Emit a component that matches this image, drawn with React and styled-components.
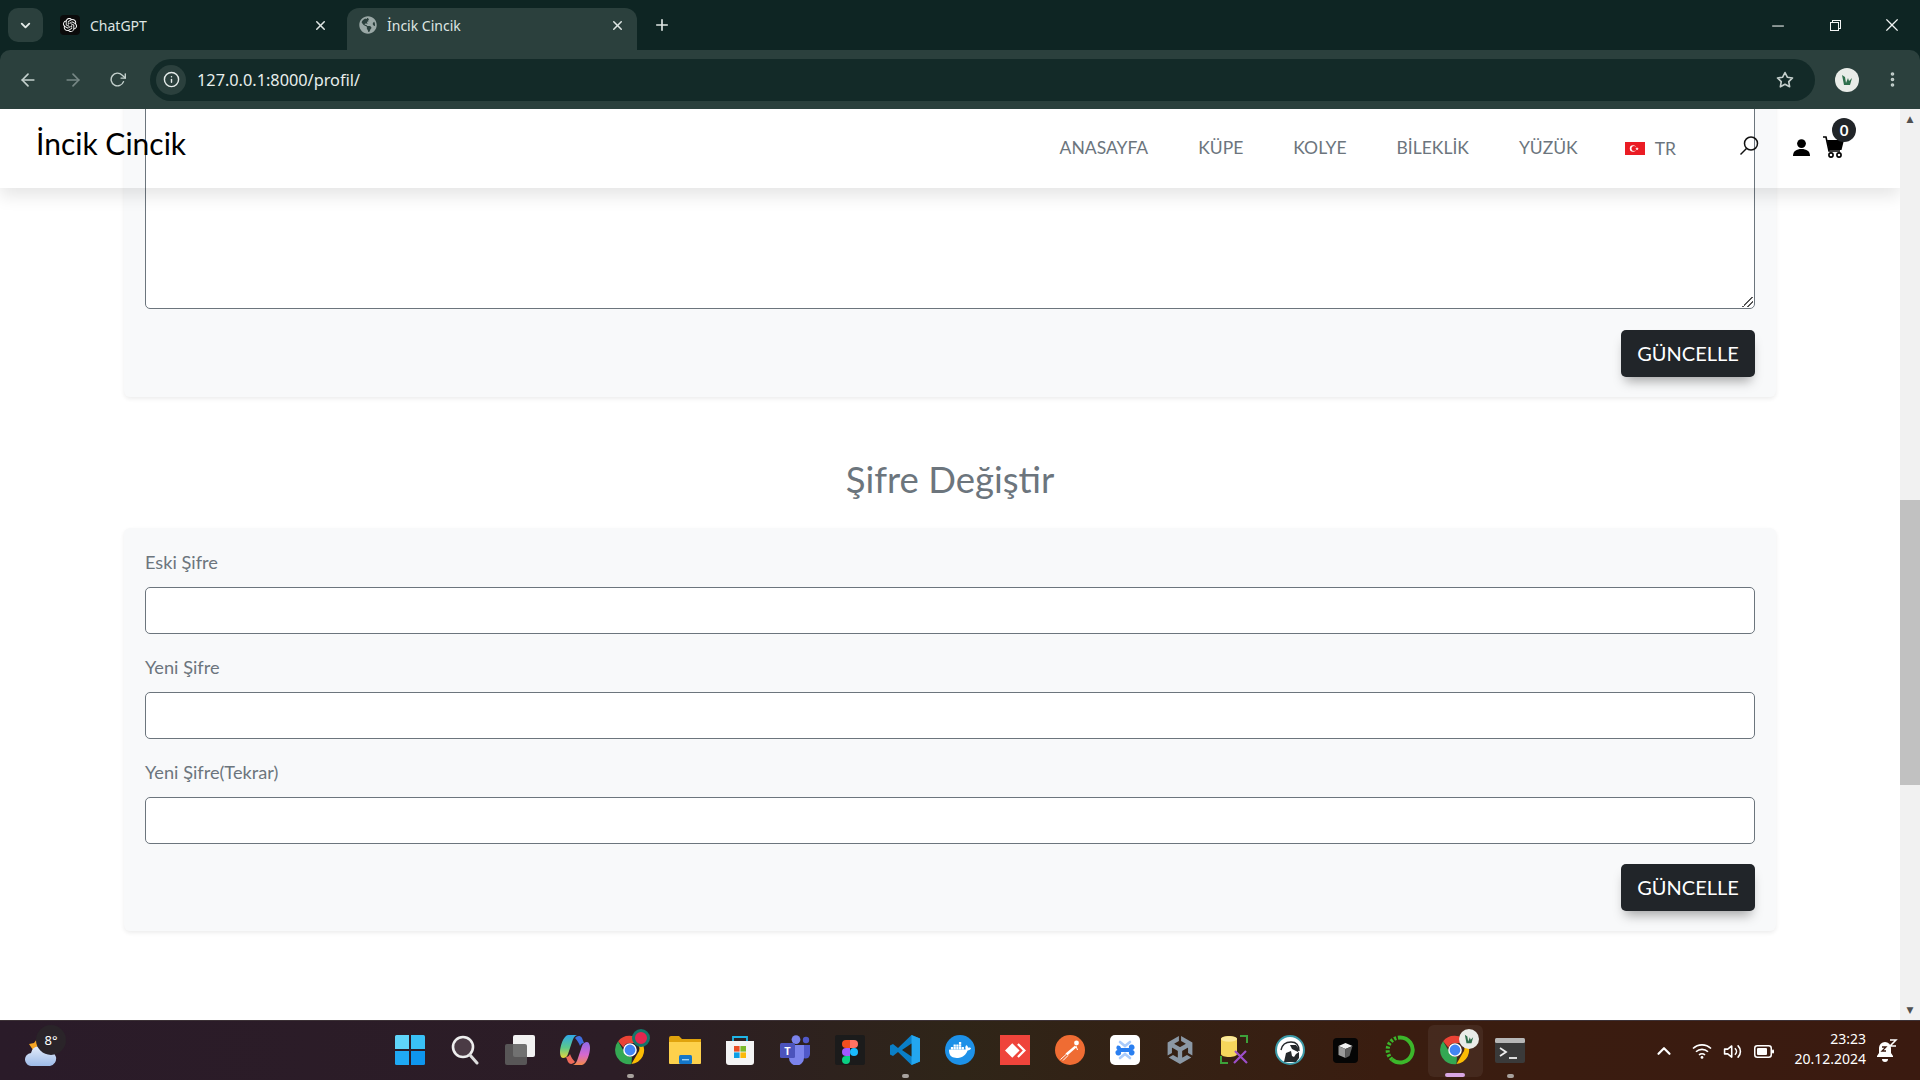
import React from "react";
import styled, { createGlobalStyle } from "styled-components";
import { SiOpenai, SiDocker, SiAnydesk, SiUnity } from "react-icons/si";
import { VscChromeMinimize, VscChromeRestore, VscChromeClose } from "react-icons/vsc";
import { FaGlobeAmericas } from "react-icons/fa";
import { FiArrowLeft, FiArrowRight, FiRotateCw, FiInfo, FiStar, FiX, FiPlus, FiChevronDown, FiChevronUp, FiMoreVertical, FiVolume2 } from "react-icons/fi";

const GlobalStyle = createGlobalStyle`
  html, body {
    margin: 0;
    height: 100%;
    overflow: hidden;
  }
  * {
    box-sizing: border-box;
  }
`;

function ChromeLogo({ size = 34 }) {
  return (
    <svg width={size} height={size} viewBox="0 0 48 48">
      <path d="M24 4a20 20 0 0 1 17.3 10H24a10 10 0 0 0-9.3 6.3L7.2 11.8A20 20 0 0 1 24 4z" fill="#ea4335" />
      <path d="M41.3 14A20 20 0 0 1 26 43.9l8.6-14.9a10 10 0 0 0-1.4-15z" fill="#fbbc04" />
      <path d="M26 43.9A20 20 0 0 1 7.2 11.8l8.7 15a10 10 0 0 0 10.9 7z" fill="#34a853" />
      <circle cx="24" cy="24" r="8.6" fill="#4285f4" stroke="#fff" strokeWidth="2" />
    </svg>
  );
}

function WindowsLogo() {
  return (
    <svg width="30" height="30" viewBox="0 0 30 30">
      <path d="M0 1.5 A1.5 1.5 0 0 1 1.5 0H14v14H0z" fill="#5fd5f9" />
      <path d="M16 0h12.5A1.5 1.5 0 0 1 30 1.5V14H16z" fill="#39c1f6" />
      <path d="M0 16h14v14H1.5A1.5 1.5 0 0 1 0 28.5z" fill="#1fa9f3" />
      <path d="M16 16h14v12.5a1.5 1.5 0 0 1-1.5 1.5H16z" fill="#0e96ee" />
    </svg>
  );
}

function SearchGlyph() {
  return (
    <svg width="28" height="30" viewBox="0 0 28 30">
      <circle cx="12" cy="12" r="10" fill="#4b3b45" stroke="#eee" strokeWidth="2.6" />
      <path d="M19 20l7 8" stroke="#ddd" strokeWidth="3" strokeLinecap="round" />
    </svg>
  );
}

function TaskView() {
  return (
    <svg width="30" height="30" viewBox="0 0 30 30">
      <rect x="8" y="0" width="22" height="22" rx="2" fill="#f2f2f2" />
      <rect x="0" y="9" width="22" height="21" rx="2" fill="#5f5f5f" fillOpacity=".88" />
    </svg>
  );
}

function Copilot() {
  return (
    <svg width="30" height="30" viewBox="0 0 30 30">
      <defs>
        <linearGradient id="copLeft" x1="0" y1="0" x2="0" y2="1">
          <stop offset="0" stopColor="#2fa8e8" />
          <stop offset=".55" stopColor="#5cc98a" />
          <stop offset="1" stopColor="#e8d63c" />
        </linearGradient>
        <linearGradient id="copRight" x1="0" y1="0" x2="0" y2="1">
          <stop offset="0" stopColor="#8f6ae8" />
          <stop offset=".55" stopColor="#d668cf" />
          <stop offset="1" stopColor="#f28a4a" />
        </linearGradient>
      </defs>
      <path d="M8 0h9c-3 1-4 4-5 7l-4 12c-1 3-3 4-5 4-2 0-3-3-3-6C0 12 3 1 8 0z" fill="url(#copLeft)" />
      <path d="M22 30h-9c3-1 4-4 5-7l4-12c1-3 3-4 5-4 2 0 3 3 3 6 0 5-3 16-8 17z" fill="url(#copRight)" />
      <path d="M15 3c2-2 5-3 7 0l2 5c-2 0-3 1-4 3-1-3-3-6-5-8z" fill="#3f6fe0" />
      <path d="M15 27c-2 2-5 3-7 0l-2-5c2 0 3-1 4-3 1 3 3 6 5 8z" fill="#ef6a5a" />
    </svg>
  );
}

function Folder() {
  return (
    <svg width="32" height="30" viewBox="0 0 32 30">
      <path d="M0 3a2 2 0 0 1 2-2h8l3 3h19v6H0z" fill="#e0a30d" />
      <path d="M0 7h32v21a1 1 0 0 1-1 1H1a1 1 0 0 1-1-1z" fill="#fdd14c" />
      <rect x="10" y="20" width="13" height="9" rx="1.5" fill="#1477c9" />
      <rect x="13" y="24" width="7" height="1.4" fill="#9bd2f5" />
    </svg>
  );
}

function Store() {
  return (
    <svg width="30" height="30" viewBox="0 0 30 30">
      <path d="M8 6V2h14v4" fill="none" stroke="#1fb6e8" strokeWidth="1.8" />
      <path d="M1 6h28v21a3 3 0 0 1-3 3H4a3 3 0 0 1-3-3z" fill="#f4f4f4" />
      <rect x="9" y="11" width="5.6" height="5.6" fill="#e94f26" />
      <rect x="15.4" y="11" width="5.6" height="5.6" fill="#7cb928" />
      <rect x="9" y="17.4" width="5.6" height="5.6" fill="#0f9fe6" />
      <rect x="15.4" y="17.4" width="5.6" height="5.6" fill="#fbb90a" />
    </svg>
  );
}

function Teams() {
  return (
    <svg width="30" height="30" viewBox="0 0 30 30">
      <circle cx="26" cy="5" r="3.2" fill="#5059c9" />
      <path d="M21 10h9v9a4 4 0 0 1-9 0z" fill="#5059c9" />
      <circle cx="16" cy="4.6" r="4.4" fill="#7b83eb" />
      <path d="M9 10h15v13a7 7 0 0 1-15 0z" fill="#7b83eb" />
      <rect x="0" y="8" width="15" height="15" rx="1.5" fill="#4b53bc" />
      <text x="7.5" y="19.5" fontFamily="'Open Sans', sans-serif" fontSize="11" fontWeight="700" fill="#fff" textAnchor="middle">T</text>
    </svg>
  );
}

function Figma() {
  return (
    <svg width="30" height="30" viewBox="0 0 30 30">
      <rect width="30" height="30" rx="2" fill="#1b1b1b" />
      <path d="M15 5h-4a4 4 0 0 0 0 8h4z" fill="#f24e1e" />
      <path d="M15 5h4a4 4 0 0 1 0 8h-4z" fill="#ff7262" />
      <path d="M15 13h-4a4 4 0 0 0 0 8h4z" fill="#a259ff" />
      <circle cx="19" cy="17" r="4" fill="#1abcfe" />
      <path d="M11 21h4v4a4 4 0 1 1-4-4z" fill="#0acf83" />
    </svg>
  );
}

function VsCode() {
  return (
    <svg width="30" height="30" viewBox="0 0 30 30">
      <path d="M21.5 0L30 3.6v22.8L21.5 30 8 17l-5 4-3-1.6v-8.8L3 9l5 4z" fill="#0a7fc7" />
      <path d="M21.5 0L30 3.6v22.8L21.5 30z" fill="#23a6f0" />
      <path d="M21.5 8.5L12 15l9.5 6.5z" fill="#2b2418" />
    </svg>
  );
}

function DockerBadge() {
  return (
    <Round $bg="#1d91e8">
      <SiDocker size={22} color="#fff" />
    </Round>
  );
}

function PostmanBadge() {
  return (
    <svg width="30" height="30" viewBox="0 0 30 30">
      <circle cx="15" cy="15" r="15" fill="#ef6c33" />
      <circle cx="21.5" cy="8" r="2.4" fill="#fff" />
      <path d="M20 10.5L10.5 18.5l1.8 2 9-8z" fill="#fff" />
      <path d="M11 19.5L5.5 24.5M13 20.5L8 25.5" stroke="#fff" strokeWidth="1" />
      <path d="M21 11l1.5 4" stroke="#fff" strokeWidth="1" />
    </svg>
  );
}

function AnyDesk() {
  return (
    <Square $bg="#ef443b">
      <SiAnydesk size={21} color="#fff" />
    </Square>
  );
}

function BlueApp() {
  return (
    <svg width="30" height="30" viewBox="0 0 30 30">
      <rect width="30" height="30" rx="5" fill="#fff" />
      <path d="M10 7l5 4 5-4" fill="none" stroke="#a9cbfb" strokeWidth="2.6" strokeLinecap="round" />
      <path d="M10 23l5-4 5 4" fill="none" stroke="#a9cbfb" strokeWidth="2.6" strokeLinecap="round" />
      <path d="M7.5 10.5a2.8 2.8 0 0 1 3.5 2.5h8a2.8 2.8 0 1 1 3.5 2 2.8 2.8 0 1 1-3.5 2h-8a2.8 2.8 0 1 1-3.5-2 2.8 2.8 0 0 1 0-4.5z" fill="#2a7ff0" />
    </svg>
  );
}

function SqlTool() {
  return (
    <svg width="30" height="30" viewBox="0 0 30 30">
      <path d="M1 4c0-4 16-4 16 0v15c0 4-16 4-16 0z" fill="#f5d65c" />
      <ellipse cx="9" cy="4" rx="8" ry="2.8" fill="#fbe99a" />
      <path d="M20 1h7v7M1 21v7h7" fill="none" stroke="#3da13a" strokeWidth="2" />
      <path d="M14 28l12-12M15 16l12 12" stroke="#9c4fc9" strokeWidth="2.2" />
    </svg>
  );
}

function Dbeaver() {
  return (
    <svg width="30" height="30" viewBox="0 0 30 30">
      <circle cx="15" cy="15" r="14" fill="#fff" stroke="#3b9aa8" strokeWidth="2" />
      <path d="M6 15c1-5 5-8 10-8 5 0 8 3 8 9" fill="none" stroke="#25282b" strokeWidth="1.4" />
      <path d="M15 10l6 0 3 4-1 3-6-3z" fill="#25282b" />
      <path d="M9 27l2-9 5-2 1 5 2 1 2-3 3-2 0 6-3 4z" fill="#25282b" />
      <path d="M17 17l2 0 0 3-1 0z" fill="#fff" />
    </svg>
  );
}

function BlackBox() {
  return (
    <svg width="25" height="25" viewBox="0 0 25 25">
      <rect width="25" height="25" rx="4" fill="#050505" />
      <path d="M12.5 5l7 3-7 3-7-3z" fill="#f0f0f0" />
      <path d="M5.5 8l7 3v9l-7-3z" fill="#9a9a9a" />
      <path d="M19.5 8l-7 3v9l4-2z" fill="#5d5d5d" />
    </svg>
  );
}

function GreenRing() {
  return (
    <svg width="30" height="30" viewBox="0 0 30 30">
      <path d="M15 2.5a12.5 12.5 0 1 1-8 22" fill="none" stroke="#3cb72b" strokeWidth="4" />
      <path d="M7 24.5A12.5 12.5 0 0 1 15 2.5" fill="none" stroke="#3cb72b" strokeWidth="4" strokeDasharray="2.4 1.6" />
    </svg>
  );
}

function Terminal() {
  return (
    <svg width="30" height="30" viewBox="0 0 30 30">
      <rect y="3" width="30" height="25" rx="2" fill="#3a3a3a" />
      <rect y="3" width="30" height="5" rx="1.5" fill="#b7b7b7" />
      <path d="M5 13l6 4-6 4" fill="none" stroke="#eee" strokeWidth="1.8" />
      <path d="M14 23h8" stroke="#eee" strokeWidth="1.8" />
    </svg>
  );
}

function Weather() {
  return (
    <svg width="32" height="27" viewBox="0 0 32 27">
      <path d="M4 5l5-1 3-4 2 6-6 5z" fill="#f5a524" />
      <defs>
        <linearGradient id="cloudFill" x1="0" y1="0" x2="0" y2="1">
          <stop offset="0" stopColor="#e4ecfa" />
          <stop offset="1" stopColor="#9dbbe8" />
        </linearGradient>
      </defs>
      <path d="M7 27a6.5 6.5 0 0 1-1-13 8.5 8.5 0 0 1 16-2 7.5 7.5 0 0 1 3 15z" fill="url(#cloudFill)" />
    </svg>
  );
}

function Flag() {
  return (
    <svg width="20" height="13" viewBox="0 0 20 13">
      <rect width="20" height="13" fill="#ea1c24" />
      <circle cx="8" cy="6.5" r="3.2" fill="#fff" />
      <circle cx="9" cy="6.5" r="2.5" fill="#ea1c24" />
      <path d="M12 5l.5 1.2 1.3 0-1 .8.4 1.3-1.2-.8-1 .8.3-1.3-1-.8 1.3 0z" fill="#fff" />
    </svg>
  );
}

function Avatar({ size }) {
  return (
    <svg width={size} height={size} viewBox="0 0 24 24">
      <circle cx="12" cy="12" r="12" fill="#e9ece8" />
      <path d="M7 7l3 2 1 6 2-5 1 3 3-3-2 7H9z" fill="#2e6e4b" />
    </svg>
  );
}

function Bell() {
  return (
    <svg width="22" height="24" viewBox="0 0 22 24">
      <path d="M9 3a6 6 0 0 0-6 6v5l-2 3v1h16v-1l-2-3V9a6 6 0 0 0-6-6z" fill="#fff" />
      <path d="M6 20a3 3 0 0 0 6 0z" fill="#fff" />
      <path d="M6 8h4l-4 4h4" fill="none" stroke="#3a1a10" strokeWidth="1.3" />
      <path d="M14 1h6l-6 6h6" fill="none" stroke="#fff" strokeWidth="1.5" />
    </svg>
  );
}

function NavSearchIcon() {
  return (
    <svg width="20" height="20" viewBox="0 0 20 20">
      <circle cx="12" cy="7.5" r="6.5" fill="none" stroke="#111" strokeWidth="1.5" />
      <path d="M7.5 12.5L1.5 18.5" stroke="#111" strokeWidth="1.5" />
    </svg>
  );
}

function PersonIcon() {
  return (
    <svg width="17" height="17" viewBox="0 0 17 17">
      <circle cx="8.5" cy="4.6" r="4.4" fill="#000" />
      <path d="M0 17c0-5 3.5-7 8.5-7s8.5 2 8.5 7z" fill="#000" />
    </svg>
  );
}

function CartIcon() {
  return (
    <svg width="21" height="22" viewBox="0 0 21 22">
      <path d="M0 1h3l3 14h11" fill="none" stroke="#000" strokeWidth="1.6" />
      <path d="M4 4h17l-2.5 10H6z" fill="#000" />
      <circle cx="8" cy="19" r="2.1" fill="none" stroke="#000" strokeWidth="1.6" />
      <circle cx="16" cy="19" r="2.1" fill="none" stroke="#000" strokeWidth="1.6" />
    </svg>
  );
}

function WifiIcon() {
  return (
    <svg width="20" height="16" viewBox="0 0 20 16">
      <path d="M1 5.5a13 13 0 0 1 18 0M4 8.8a8.6 8.6 0 0 1 12 0M7 12a4.3 4.3 0 0 1 6 0" fill="none" stroke="#fff" strokeWidth="1.6" />
      <circle cx="10" cy="14.4" r="1.4" fill="#fff" />
    </svg>
  );
}

function BatteryIcon() {
  return (
    <svg width="20" height="13" viewBox="0 0 20 13">
      <rect x=".75" y=".75" width="16.5" height="11.5" rx="2.5" fill="none" stroke="#fff" strokeWidth="1.5" />
      <rect x="3" y="3" width="10" height="7" rx="1" fill="#fff" />
      <rect x="18" y="4.5" width="2" height="4" rx="1" fill="#fff" />
    </svg>
  );
}

const taskbarIcons = [
  { icon: <WindowsLogo /> },
  { icon: <SearchGlyph /> },
  { icon: <TaskView /> },
  { icon: <Copilot /> },
  { icon: <ChromeLogo />, dot: true, badge: "red" },
  { icon: <Folder /> },
  { icon: <Store /> },
  { icon: <Teams /> },
  { icon: <Figma /> },
  { icon: <VsCode />, dot: true },
  { icon: <DockerBadge /> },
  { icon: <AnyDesk /> },
  { icon: <PostmanBadge /> },
  { icon: <BlueApp /> },
  { icon: <SiUnity size={28} color="#8b98a5" /> },
  { icon: <SqlTool /> },
  { icon: <Dbeaver /> },
  { icon: <BlackBox /> },
  { icon: <GreenRing /> },
  { icon: <ChromeLogo />, active: true, badge: "avatar" },
  { icon: <Terminal />, dot: true },
];

const navLinks = ["ANASAYFA", "KÜPE", "KOLYE", "BİLEKLİK", "YÜZÜK"];

function App() {
  return (
    <>
      <GlobalStyle />
      <Screen>
        <TabStrip>
          <TabSearch><FiChevronDown size={15} strokeWidth={3} /></TabSearch>
          <Tab>
            <OpenAiBox><SiOpenai size={14} color="#fff" /></OpenAiBox>
            <TabTitle>ChatGPT</TabTitle>
            <FiX size={15} strokeWidth={2.4} />
          </Tab>
          <Tab $active>
            <FaGlobeAmericas size={18} color="#9aa8a6" />
            <TabTitle>İncik Cincik</TabTitle>
            <FiX size={15} strokeWidth={2.4} />
          </Tab>
          <NewTab><FiPlus size={18} strokeWidth={2.2} /></NewTab>
          <WindowButtons>
            <WindowButton><VscChromeMinimize size={17} /></WindowButton>
            <WindowButton><VscChromeRestore size={16} /></WindowButton>
            <WindowButton><VscChromeClose size={18} /></WindowButton>
          </WindowButtons>
        </TabStrip>

        <Toolbar>
          <ToolIcon><FiArrowLeft size={20} /></ToolIcon>
          <ToolIcon $dim><FiArrowRight size={20} /></ToolIcon>
          <ToolIcon><FiRotateCw size={17} /></ToolIcon>
          <Omnibox>
            <InfoChip><FiInfo size={17} /></InfoChip>
            <Url>127.0.0.1:8000/profil/</Url>
            <FiStar size={18} color="#c4cfcc" strokeWidth={2.2} />
          </Omnibox>
          <ProfileSlot><Avatar size={24} /></ProfileSlot>
          <MenuIcon><FiMoreVertical size={19} strokeWidth={2.6} /></MenuIcon>
        </Toolbar>

        <Viewport>
          <PageColumn>
            <Navbar>
              <Logo>İncik Cincik</Logo>
              <NavLinks>
                {navLinks.map((link) => (
                  <NavLink key={link}>{link}</NavLink>
                ))}
                <LangLink><Flag /> TR</LangLink>
              </NavLinks>
              <NavIcons>
                <SearchWrap><NavSearchIcon /></SearchWrap>
                <PersonWrap><PersonIcon /></PersonWrap>
                <CartWrap>
                  <CartIcon />
                  <CartBadge>0</CartBadge>
                </CartWrap>
              </NavIcons>
            </Navbar>

            <Card>
              <TextArea />
              <SubmitRow><SubmitButton>GÜNCELLE</SubmitButton></SubmitRow>
            </Card>

            <SectionTitle>Şifre Değiştir</SectionTitle>

            <Card>
              <Field>
                <FieldLabel>Eski Şifre</FieldLabel>
                <TextInput />
              </Field>
              <Field>
                <FieldLabel>Yeni Şifre</FieldLabel>
                <TextInput />
              </Field>
              <Field>
                <FieldLabel>Yeni Şifre(Tekrar)</FieldLabel>
                <TextInput />
              </Field>
              <SubmitRow><SubmitButton>GÜNCELLE</SubmitButton></SubmitRow>
            </Card>
          </PageColumn>

          <Scrollbar>
            <ScrollArrow>▲</ScrollArrow>
            <ScrollTrack><ScrollThumb /></ScrollTrack>
            <ScrollArrow>▼</ScrollArrow>
          </Scrollbar>
        </Viewport>

        <Taskbar>
          <WeatherArea>
            <Weather />
            <Temp>8°</Temp>
          </WeatherArea>
          <TaskIcons>
            {taskbarIcons.map((item, index) => (
              <TaskItem key={index} $active={item.active}>
                {item.icon}
                {item.badge === "red" && <RedBadge />}
                {item.badge === "avatar" && <AvatarBadge><Avatar size={20} /></AvatarBadge>}
                {item.dot && <TaskDot />}
                {item.active && <TaskActiveBar />}
              </TaskItem>
            ))}
          </TaskIcons>
          <Tray>
            <TrayIcon $gap={8}><FiChevronUp size={22} strokeWidth={2.4} /></TrayIcon>
            <TrayIcon><WifiIcon /></TrayIcon>
            <TrayIcon $gap={2}><FiVolume2 size={19} /></TrayIcon>
            <TrayIcon><BatteryIcon /></TrayIcon>
            <Clock>
              <span>23:23</span>
              <span>20.12.2024</span>
            </Clock>
            <Bell />
          </Tray>
        </Taskbar>
      </Screen>
    </>
  );
}

const Screen = styled.div`
  width: 1920px;
  height: 1080px;
  display: flex;
  flex-direction: column;
  overflow: hidden;
  background: #0e2523;
  font-family: "Lato", sans-serif;
`;

const TabStrip = styled.div`
  height: 50px;
  flex: none;
  display: flex;
  align-items: flex-end;
  padding-left: 8px;
  background: #0e2523;
  color: #dfe6e4;
  font-family: "Noto Sans", sans-serif;
`;

const TabSearch = styled.div`
  width: 35px;
  height: 34px;
  margin-bottom: 8px;
  margin-right: 11px;
  border-radius: 10px;
  background: #2b403d;
  color: #e4ebe9;
  display: flex;
  align-items: center;
  justify-content: center;
`;

const Tab = styled.div`
  width: 290px;
  height: 42px;
  padding: 0 ${(p) => (p.$active ? "12px" : "16px")} 8px ${(p) => (p.$active ? "12px" : "6px")};
  margin-left: ${(p) => (p.$active ? "3px" : "0")};
  display: flex;
  align-items: center;
  gap: 10px;
  border-radius: 12px 12px 0 0;
  background: ${(p) => (p.$active ? "#2b403d" : "transparent")};
`;

const OpenAiBox = styled.div`
  width: 20px;
  height: 20px;
  border-radius: 4px;
  background: #0b0b0b;
  display: flex;
  align-items: center;
  justify-content: center;
`;

const TabTitle = styled.span`
  flex: 1;
  font-size: 14px;
  white-space: nowrap;
`;

const NewTab = styled.div`
  margin-left: 16px;
  margin-bottom: 13px;
  height: 25px;
  display: flex;
  align-items: center;
`;

const WindowButtons = styled.div`
  margin-left: auto;
  display: flex;
  align-self: stretch;
  align-items: center;
`;

const WindowButton = styled.div`
  width: 57px;
  display: flex;
  justify-content: center;
  color: #f1f4f3;
`;

const Toolbar = styled.div`
  height: 59px;
  flex: none;
  display: flex;
  align-items: center;
  padding-left: 5px;
  background: #2b403d;
  border-radius: 10px 10px 0 0;
`;

const ToolIcon = styled.div`
  width: 45px;
  flex: none;
  display: flex;
  justify-content: center;
  color: ${(p) => (p.$dim ? "#778785" : "#c4d0cd")};
`;

const MenuIcon = styled.div`
  width: 27px;
  flex: none;
  display: flex;
  justify-content: center;
  color: #c4d0cd;
`;

const Omnibox = styled.div`
  width: 1665px;
  flex: none;
  height: 42px;
  margin-left: 10px;
  padding: 0 21px 0 6px;
  display: flex;
  align-items: center;
  border-radius: 21px;
  background: #132a28;
`;

const InfoChip = styled.div`
  width: 30px;
  height: 30px;
  border-radius: 50%;
  background: #2b403d;
  color: #e6ecea;
  display: flex;
  align-items: center;
  justify-content: center;
`;

const Url = styled.div`
  flex: 1;
  margin-left: 11px;
  color: #e8eeec;
  font-family: "Noto Sans", sans-serif;
  font-size: 16.3px;
`;

const ProfileSlot = styled.div`
  width: 64px;
  flex: none;
  display: flex;
  justify-content: center;
`;

const Viewport = styled.div`
  flex: 1;
  min-height: 0;
  display: flex;
  background: #fff;
`;

const PageColumn = styled.div`
  position: relative;
  flex: 1;
  min-width: 0;
  overflow: hidden;
  padding: 0 124px 89px;
  display: flex;
  flex-direction: column;
  justify-content: flex-end;
`;

const Navbar = styled.nav`
  position: absolute;
  top: 0;
  left: 0;
  right: 0;
  z-index: 2;
  height: 79px;
  display: flex;
  align-items: center;
  padding-left: 36px;
  background: transparent;
  box-shadow: 0 8px 16px rgba(0, 0, 0, 0.1);
`;

const Logo = styled.div`
  font-size: 30px;
  color: #000;
  margin-top: -12px;
`;

const NavLinks = styled.div`
  margin-left: auto;
  display: flex;
  align-items: center;
  gap: 50px;
  margin-top: -3px;
`;

const NavLink = styled.a`
  font-size: 17.5px;
  color: #6c757d;
`;

const LangLink = styled.a`
  display: flex;
  align-items: center;
  gap: 10px;
  margin-left: -3px;
  margin-top: 3px;
  font-size: 17.5px;
  color: #6c757d;
`;

const NavIcons = styled.div`
  display: flex;
  align-items: center;
  gap: 13px;
  margin-left: 63px;
  margin-right: 56px;
`;

const SearchWrap = styled.div`
  display: flex;
  margin-right: 21px;
  margin-top: -6px;
`;

const PersonWrap = styled.div`
  display: flex;
  margin-top: -2px;
`;

const CartWrap = styled.div`
  position: relative;
  display: flex;
  margin-top: -4px;
`;

const CartBadge = styled.span`
  position: absolute;
  top: -18px;
  left: 9px;
  width: 24px;
  height: 24px;
  border-radius: 50%;
  background: #212529;
  color: #fff;
  font-size: 15px;
  font-weight: 700;
  display: flex;
  align-items: center;
  justify-content: center;
`;

const Card = styled.section`
  flex: none;
  padding: 21px 21px 20px;
  background: #f8f9fa;
  border-radius: 6px;
  box-shadow: 0 2px 4px rgba(0, 0, 0, 0.075);
  display: flex;
  flex-direction: column;
`;

const TextArea = styled.div`
  height: 330px;
  margin-bottom: 1px;
  border: 1px solid #6c757d;
  border-radius: 5px;
  background: #fff;
  position: relative;
  &::after {
    content: "";
    position: absolute;
    right: 1px;
    bottom: 1px;
    width: 11px;
    height: 11px;
    background: linear-gradient(135deg, transparent 50%, #555 50%, #555 58%, transparent 58%, transparent 72%, #555 72%, #555 80%, transparent 80%);
  }
`;

const SubmitRow = styled.div`
  display: flex;
  justify-content: flex-end;
  margin-top: 20px;
`;

const SubmitButton = styled.button`
  width: 134px;
  height: 47px;
  border: none;
  border-radius: 5px;
  background: #212529;
  color: #fff;
  font-family: "Lato", sans-serif;
  font-size: 20px;
  line-height: 1;
  padding-bottom: 2px;
  box-shadow: 0 8px 12px -4px rgba(0, 0, 0, 0.35);
`;

const SectionTitle = styled.h2`
  margin: 0;
  padding: 64px 0 31px;
  text-align: center;
  font-size: 36.5px;
  line-height: 36px;
  font-weight: 400;
  color: #6c757d;
`;

const Field = styled.div`
  display: flex;
  flex-direction: column;
  & + & {
    margin-top: 20px;
  }
`;

const FieldLabel = styled.label`
  font-size: 18.2px;
  line-height: 27px;
  margin-bottom: 11px;
  color: #6c757d;
`;

const TextInput = styled.input`
  height: 47px;
  border: 1px solid #6c757d;
  border-radius: 5px;
  background: #fff;
`;

const Scrollbar = styled.div`
  width: 20px;
  flex: none;
  display: flex;
  flex-direction: column;
  background: #f1f1f1;
`;

const ScrollArrow = styled.div`
  height: 20px;
  font-size: 9px;
  line-height: 20px;
  text-align: center;
  color: #505050;
  font-family: "DejaVu Sans", sans-serif;
`;

const ScrollTrack = styled.div`
  flex: 1;
  padding-top: 371px;
`;

const ScrollThumb = styled.div`
  height: 285px;
  background: #c1c1c1;
`;

const Taskbar = styled.footer`
  height: 60px;
  flex: none;
  display: grid;
  grid-template-columns: 1fr auto 1fr;
  align-items: center;
  border-top: 1px solid #3c3136;
  background: linear-gradient(90deg, #2a1b29 0%, #2c1d26 32%, #2f2518 50%, #3a1d10 72%, #3a1a10 100%);
  color: #fff;
  font-family: "Noto Sans", sans-serif;
`;

const WeatherArea = styled.div`
  position: relative;
  display: flex;
  padding-left: 25px;
  padding-top: 2px;
`;

const Temp = styled.span`
  position: absolute;
  left: 36px;
  top: -12px;
  width: 30px;
  height: 30px;
  border-radius: 50%;
  background: #2a2429;
  font-size: 13px;
  display: flex;
  align-items: center;
  justify-content: center;
`;

const TaskIcons = styled.div`
  display: flex;
  height: 100%;
`;

const TaskItem = styled.div`
  position: relative;
  width: 55px;
  height: 100%;
  padding-bottom: 2px;
  display: flex;
  align-items: center;
  justify-content: center;
  border-radius: 6px;
  ${(p) => p.$active && "background: rgba(255, 255, 255, 0.06); margin: 4px 0; height: 52px;"}
`;

const TaskDot = styled.span`
  position: absolute;
  bottom: 3px;
  left: 50%;
  width: 7px;
  height: 4px;
  margin-left: -3px;
  border-radius: 2px;
  background: #a8a29e;
`;

const TaskActiveBar = styled.span`
  position: absolute;
  bottom: 0;
  left: 50%;
  width: 20px;
  height: 4px;
  margin-left: -10px;
  border-radius: 2px;
  background: #d9a7e3;
`;

const RedBadge = styled.span`
  position: absolute;
  top: 8px;
  right: 8px;
  width: 18px;
  height: 18px;
  border-radius: 50%;
  background: #e3264f;
  border: 3px solid #14766a;
`;

const AvatarBadge = styled.span`
  position: absolute;
  top: 4px;
  right: 4px;
  display: flex;
`;

const Round = styled.div`
  width: 30px;
  height: 30px;
  border-radius: 50%;
  background: ${(p) => p.$bg};
  display: flex;
  align-items: center;
  justify-content: center;
`;

const Square = styled.div`
  width: 30px;
  height: 30px;
  background: ${(p) => p.$bg};
  display: flex;
  align-items: center;
  justify-content: center;
`;

const Tray = styled.div`
  justify-self: end;
  display: flex;
  align-items: center;
  padding-right: 22px;
`;

const TrayIcon = styled.div`
  width: 30px;
  margin-right: ${(p) => p.$gap || 0}px;
  display: flex;
  justify-content: center;
`;

const Clock = styled.div`
  display: flex;
  flex-direction: column;
  align-items: flex-end;
  margin-left: 15px;
  margin-right: 10px;
  margin-bottom: 4px;
  font-size: 14px;
  line-height: 20px;
`;

export default App;
